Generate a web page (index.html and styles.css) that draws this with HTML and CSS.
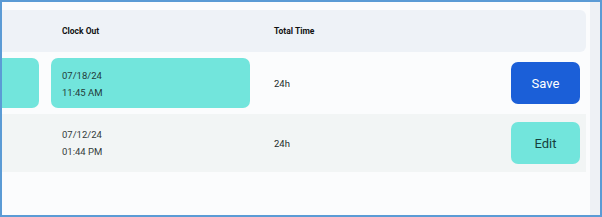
FILE: index.html
```html
<!DOCTYPE html>
<html lang="en">
<head>
    <meta charset="UTF-8">
    <title>Time Entries</title>
    <link rel="stylesheet" href="styles.css">
</head>
<body>
    <div class="frame">
        <div class="table">
            <div class="row head">
                <div class="cell"></div>
                <div class="cell">Clock Out</div>
                <div class="cell">Total Time</div>
                <div class="cell"></div>
            </div>
            <div class="row editing">
                <div class="cell"><div class="field field-cut"></div></div>
                <div class="cell"><div class="field">07/18/24<br>11:45 AM</div></div>
                <div class="cell">24h</div>
                <div class="cell"><button class="btn btn-save">Save</button></div>
            </div>
            <div class="row shaded">
                <div class="cell"></div>
                <div class="cell"><div class="plain">07/12/24<br>01:44 PM</div></div>
                <div class="cell">24h</div>
                <div class="cell"><button class="btn btn-edit">Edit</button></div>
            </div>
        </div>
        <div class="track"></div>
    </div>
</body>
</html>
```

FILE: styles.css
```css
body {
    margin: 0;
    font-family: Roboto, "Liberation Sans", sans-serif;
    background: #fff;
}
.frame {
    width: 602px;
    height: 217px;
    box-sizing: border-box;
    border: 2px solid #5b9bd5;
    display: flex;
    background: #fbfcfc;
}
.table {
    width: 588px;
    padding-top: 8px;
    background: #fbfcfd;
}
.track {
    flex-grow: 1;
    background: #eef1f5;
}
.row {
    display: grid;
    grid-template-columns: 49px 211px 249px 1fr;
    align-items: center;
    font-size: 9.5px;
    color: #222b2b;
}
.row .cell:nth-child(3) {
    padding-left: 12px;
}
.head {
    height: 42px;
    margin-right: 4px;
    background: #eef2f7;
    border-radius: 0 6px 6px 0;
    font-weight: bold;
    font-size: 8.5px;
    color: #111;
}
.head .cell:nth-child(2) {
    padding-left: 11px;
}
.editing {
    height: 62px;
}
.shaded {
    height: 58px;
    margin-right: 4px;
    background: #f2f5f5;
}
.field {
    height: 50px;
    width: 199px;
    box-sizing: border-box;
    padding: 9px 11px;
    background: #72e5dc;
    border-radius: 7px;
    line-height: 17px;
    color: #233a39;
}
.field-cut {
    width: 37px;
    border-radius: 0 7px 7px 0;
}
.plain {
    padding-left: 11px;
    line-height: 17px;
    color: #333b3b;
}
.btn {
    width: 69px;
    height: 42px;
    border: none;
    border-radius: 7px;
    font-family: Roboto, "Liberation Sans", sans-serif;
    font-size: 13px;
    cursor: pointer;
}
.btn-save {
    background: #1b5fd8;
    color: #fff;
}
.btn-edit {
    background: #72e5dc;
    color: #17403d;
}
```
